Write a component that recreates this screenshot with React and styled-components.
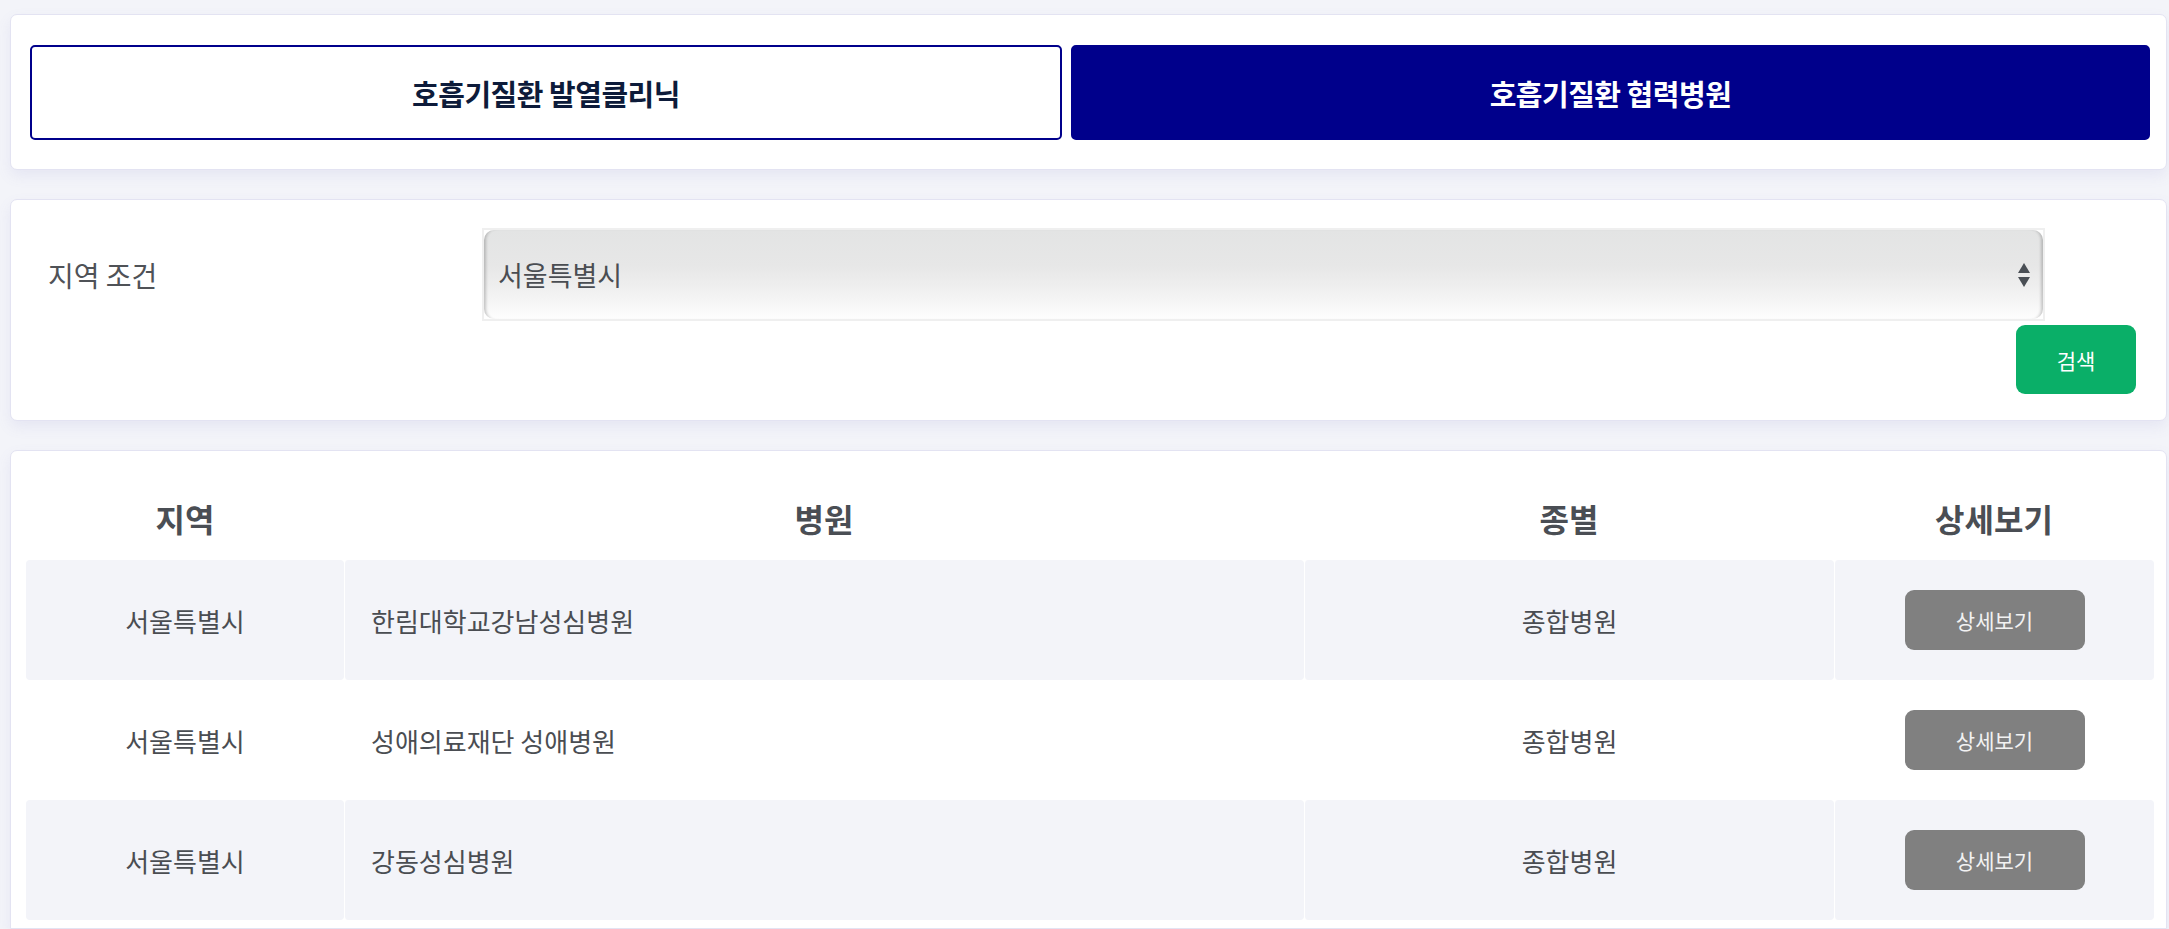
import React from "react";
import styled, { createGlobalStyle } from "styled-components";

const GlobalStyle = createGlobalStyle`
  html, body {
    margin: 0;
    padding: 0;
    background: #f3f4f9;
    font-family: "Noto Sans CJK KR", "Noto Sans", "Liberation Sans", sans-serif;
  }
  * { box-sizing: border-box; }
`;

const Page = styled.div`
  display: flex;
  flex-direction: column;
  gap: 29px;
  padding: 14px 2px 0 10px;
  min-height: 929px;
`;

const Card = styled.section`
  background: #ffffff;
  border: 1px solid #e3e3f2;
  border-radius: 7px;
  box-shadow: 0 6px 14px rgba(120, 120, 200, 0.10);
`;

const TabCard = styled(Card)`
  display: grid;
  grid-template-columns: 1032px 1fr;
  gap: 9px;
  padding: 30px 16px 29px 19px;
`;

const TabButton = styled.button`
  height: 95px;
  border-radius: 5px;
  border: 2px solid #00008b;
  background: ${(p) => (p.$active ? "#00008b" : "#ffffff")};
  color: ${(p) => (p.$active ? "#ffffff" : "#0d1b3a")};
  font-family: inherit;
  font-size: 29px;
  font-weight: 700;
  letter-spacing: -0.5px;
  cursor: pointer;
`;

const SearchCard = styled(Card)`
  display: flex;
  flex-direction: column;
  padding: 28px 30px 26px 37px;
`;

const FilterRow = styled.div`
  display: grid;
  grid-template-columns: 434px 1563px;
  align-items: center;
`;

const FilterLabel = styled.span`
  font-size: 28px;
  color: #4f5257;
`;

const SelectFrame = styled.div`
  position: relative;
  height: 93px;
  border: 2px solid #efefef;
`;

const NativeSelect = styled.select`
  appearance: none;
  -webkit-appearance: none;
  width: 100%;
  height: 100%;
  border: none;
  outline: none;
  border-radius: 10px;
  padding: 0 40px 0 14px;
  font-family: inherit;
  font-size: 27px;
  color: #4a4d52;
  background: linear-gradient(
    to bottom,
    #e3e4e4 0%,
    #e7e7e7 40%,
    #eeeeee 62%,
    #f7f7f7 85%,
    #fefefe 100%
  );
  box-shadow: inset 4px 0 3px -2px rgba(0, 0, 0, 0.2),
    inset -4px 0 3px -2px rgba(0, 0, 0, 0.2);
`;

const SelectArrows = styled.svg`
  position: absolute;
  right: 12px;
  top: 50%;
  transform: translateY(-50%);
  pointer-events: none;
`;

const ButtonRow = styled.div`
  display: flex;
  justify-content: flex-end;
  margin-top: 4px;
`;

const SearchButton = styled.button`
  width: 120px;
  height: 69px;
  border: none;
  border-radius: 9px;
  background: #0aaf68;
  color: #ffffff;
  font-family: inherit;
  font-size: 21px;
  cursor: pointer;
`;

const TableCard = styled(Card)`
  flex: 1;
  padding: 0 12px 0 15px;
  border-bottom-left-radius: 0;
  border-bottom-right-radius: 0;
`;

const columns = "318px 960px 530px 320px";

const HeaderRow = styled.div`
  display: grid;
  grid-template-columns: ${columns};
  height: 109px;
  padding-top: 24px;
`;

const HeaderCell = styled.div`
  display: flex;
  align-items: center;
  justify-content: center;
  font-size: 32px;
  font-weight: 700;
  color: #4a4e54;
`;

const BodyRow = styled.div`
  display: grid;
  grid-template-columns: ${columns};
  height: 120px;
`;

const BodyCell = styled.div`
  display: flex;
  align-items: center;
  justify-content: ${(p) => (p.$left ? "flex-start" : "center")};
  padding-left: ${(p) => (p.$left ? "26px" : "0")};
  font-size: 26px;
  color: #4a4d52;
  background: ${(p) => (p.$striped ? "#f3f4f9" : "transparent")};
  border-radius: 4px;
  border-left: 1px solid #ffffff;
  &:first-child { border-left: none; }
`;

const DetailButton = styled.button`
  width: 180px;
  height: 60px;
  border: none;
  border-radius: 9px;
  background: #808080;
  color: #f2f2f2;
  font-family: inherit;
  font-size: 21px;
  cursor: pointer;
`;

const rows = [
  { region: "서울특별시", hospital: "한림대학교강남성심병원", type: "종합병원" },
  { region: "서울특별시", hospital: "성애의료재단 성애병원", type: "종합병원" },
  { region: "서울특별시", hospital: "강동성심병원", type: "종합병원" },
];

export default function App() {
  return (
    <>
      <GlobalStyle />
      <Page>
        <TabCard>
          <TabButton>호흡기질환 발열클리닉</TabButton>
          <TabButton $active>호흡기질환 협력병원</TabButton>
        </TabCard>

        <SearchCard>
          <FilterRow>
            <FilterLabel>지역 조건</FilterLabel>
            <SelectFrame>
              <NativeSelect defaultValue="서울특별시">
                <option>서울특별시</option>
                <option>부산광역시</option>
                <option>대구광역시</option>
                <option>인천광역시</option>
              </NativeSelect>
              <SelectArrows width="14" height="26" viewBox="0 0 14 26">
                <polygon points="7,1 13,11 1,11" fill="#4a4f55" />
                <polygon points="1,15 13,15 7,25" fill="#4a4f55" />
              </SelectArrows>
            </SelectFrame>
          </FilterRow>
          <ButtonRow>
            <SearchButton>검색</SearchButton>
          </ButtonRow>
        </SearchCard>

        <TableCard>
          <HeaderRow>
            <HeaderCell>지역</HeaderCell>
            <HeaderCell>병원</HeaderCell>
            <HeaderCell>종별</HeaderCell>
            <HeaderCell>상세보기</HeaderCell>
          </HeaderRow>
          {rows.map((r, i) => {
            const striped = i % 2 === 0;
            return (
              <BodyRow key={i}>
                <BodyCell $striped={striped}>{r.region}</BodyCell>
                <BodyCell $striped={striped} $left>
                  {r.hospital}
                </BodyCell>
                <BodyCell $striped={striped}>{r.type}</BodyCell>
                <BodyCell $striped={striped}>
                  <DetailButton>상세보기</DetailButton>
                </BodyCell>
              </BodyRow>
            );
          })}
        </TableCard>
      </Page>
    </>
  );
}
